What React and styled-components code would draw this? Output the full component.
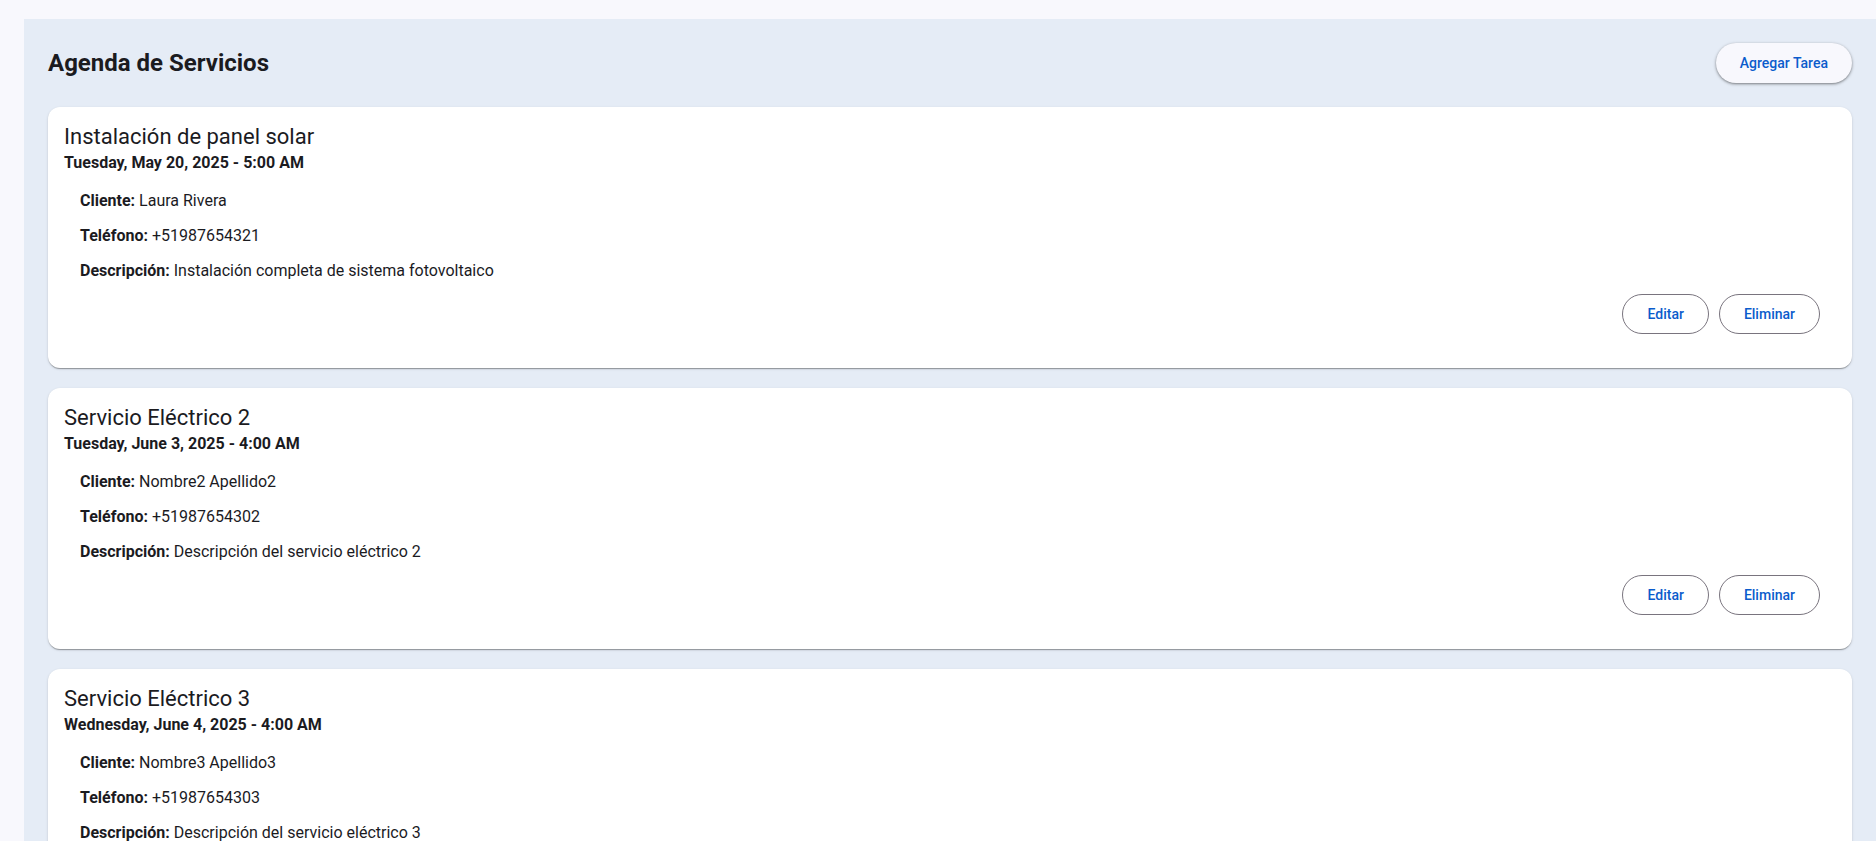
import React from "react";
import styled, { createGlobalStyle } from "styled-components";

const GlobalStyle = createGlobalStyle`
  html, body {
    margin: 0;
    padding: 0;
    background: #f8f8fd;
    font-family: Roboto, "Liberation Sans", sans-serif;
    color: #1b1b1f;
  }
`;

const Page = styled.div`
  padding: 19px 0 0 24px;
  min-height: 100vh;
  box-sizing: border-box;
`;

const Panel = styled.main`
  background: #e5ecf6;
  padding: 24px;
  min-height: calc(100vh - 19px);
  box-sizing: border-box;
`;

const Header = styled.header`
  display: flex;
  align-items: center;
  justify-content: space-between;
  margin-bottom: 24px;
`;

const PageTitle = styled.h1`
  margin: 0;
  font-size: 24px;
  font-weight: 700;
  line-height: 40px;
  color: #1b1b1f;
`;

const AddButton = styled.button`
  height: 40px;
  padding: 0 24px;
  border: none;
  border-radius: 20px;
  background: #f8f8fd;
  color: #0b5ccc;
  font-family: inherit;
  font-size: 14px;
  font-weight: 500;
  box-shadow: 0 1px 2px rgba(0, 0, 0, 0.3), 0 1px 3px 1px rgba(0, 0, 0, 0.15);
  cursor: pointer;
`;

const List = styled.div`
  display: flex;
  flex-direction: column;
  gap: 20px;
`;

const Card = styled.article`
  background: #fff;
  border-radius: 12px;
  padding: 15px 32px 34px 16px;
  box-shadow: 0 2px 1px -1px rgba(0, 0, 0, 0.2), 0 1px 1px 0 rgba(0, 0, 0, 0.14),
    0 1px 3px 0 rgba(0, 0, 0, 0.12);
`;

const CardTitle = styled.h2`
  margin: 0;
  font-size: 22px;
  font-weight: 400;
  line-height: 29px;
  color: #1b1b1f;
`;

const DateLine = styled.div`
  font-size: 16px;
  font-weight: 700;
  line-height: 24px;
`;

const Details = styled.div`
  padding-left: 16px;
  margin-top: 14px;
`;

const Row = styled.p`
  margin: 0 0 11px;
  font-size: 16px;
  line-height: 24px;

  strong {
    font-weight: 700;
  }
`;

const Actions = styled.div`
  display: flex;
  justify-content: flex-end;
  gap: 10px;
  margin-top: 4px;
`;

const OutlineButton = styled.button`
  height: 40px;
  padding: 0 24px;
  border: 1px solid #79747e;
  border-radius: 20px;
  background: transparent;
  color: #0b5ccc;
  font-family: inherit;
  font-size: 14px;
  font-weight: 500;
  cursor: pointer;
`;

const tasks = [
  {
    title: "Instalación de panel solar",
    date: "Tuesday, May 20, 2025 - 5:00 AM",
    cliente: "Laura Rivera",
    telefono: "+51987654321",
    descripcion: "Instalación completa de sistema fotovoltaico",
  },
  {
    title: "Servicio Eléctrico 2",
    date: "Tuesday, June 3, 2025 - 4:00 AM",
    cliente: "Nombre2 Apellido2",
    telefono: "+51987654302",
    descripcion: "Descripción del servicio eléctrico 2",
  },
  {
    title: "Servicio Eléctrico 3",
    date: "Wednesday, June 4, 2025 - 4:00 AM",
    cliente: "Nombre3 Apellido3",
    telefono: "+51987654303",
    descripcion: "Descripción del servicio eléctrico 3",
  },
];

const App = () => {
  return (
    <Page>
      <GlobalStyle />
      <Panel>
        <Header>
          <PageTitle>Agenda de Servicios</PageTitle>
          <AddButton>Agregar Tarea</AddButton>
        </Header>
        <List>
          {tasks.map((task) => (
            <Card key={task.telefono}>
              <CardTitle>{task.title}</CardTitle>
              <DateLine>{task.date}</DateLine>
              <Details>
                <Row>
                  <strong>Cliente:</strong> {task.cliente}
                </Row>
                <Row>
                  <strong>Teléfono:</strong> {task.telefono}
                </Row>
                <Row>
                  <strong>Descripción:</strong> {task.descripcion}
                </Row>
              </Details>
              <Actions>
                <OutlineButton>Editar</OutlineButton>
                <OutlineButton>Eliminar</OutlineButton>
              </Actions>
            </Card>
          ))}
        </List>
      </Panel>
    </Page>
  );
};

export default App;
